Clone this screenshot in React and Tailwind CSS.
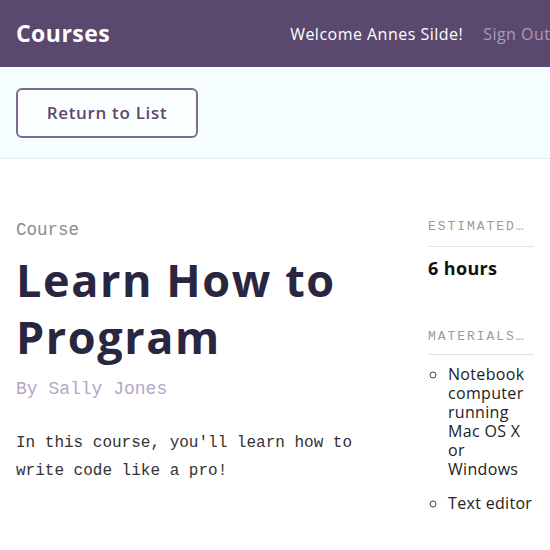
export default function App() {
  const sans = { fontFamily: '"Open Sans", "Noto Sans", sans-serif' };
  return (
    <div className="w-[550px] h-[550px] overflow-hidden bg-white" style={sans}>
      <header className="h-[67px] bg-[#5b486e] flex items-center pl-4 w-[620px]">
        <h1 className="text-[23px] font-bold text-white tracking-[0.02em]">Courses</h1>
        <div className="ml-[180px] flex items-center gap-5 text-[16px] tracking-[0.03em] whitespace-nowrap">
          <span className="text-white">Welcome Annes Silde!</span>
          <span className="text-[#a99cb8]">Sign Out</span>
        </div>
      </header>

      <div className="h-[92px] bg-[#f5fdff] border-b border-[#e6f1f4] px-4 flex items-center">
        <button className="h-[50px] w-[182px] border-2 border-[#7d6b90] rounded-md text-[#5b486e] text-[17px] font-semibold tracking-[0.04em] bg-white/60">
          Return to List
        </button>
      </div>

      <div className="flex px-4 pt-[58px]">
        <main className="w-[380px] shrink-0">
          <p className="text-[17.5px] text-[#8c8c8c] font-['Liberation_Mono',monospace]">Course</p>
          <h2 className="mt-[8px] text-[45px] leading-[57px] font-bold text-[#2a2540] tracking-[0.035em]">
            Learn How to Program
          </h2>
          <p className="mt-[11px] text-[18px] text-[#b3a7c5] font-['Liberation_Mono',monospace]">By Sally Jones</p>
          <p className="mt-[26px] text-[16px] leading-[28px] text-[#333] font-['Liberation_Mono',monospace] pr-4">
            In this course, you'll learn how to write code like a pro!
          </p>
        </main>

        <aside className="ml-[32px] w-[107px]">
          <p className="text-[13px] tracking-[0.15em] text-[#9a9a9a] uppercase whitespace-nowrap overflow-hidden font-['Liberation_Mono',monospace] pb-[9px] border-b border-[#e2e2e2]">
            Estimated…
          </p>
          <p className="mt-[8px] text-[18px] font-bold text-[#111] tracking-[0.02em]">6 hours</p>

          <p className="mt-[45px] text-[13px] tracking-[0.15em] text-[#9a9a9a] uppercase whitespace-nowrap overflow-hidden font-['Liberation_Mono',monospace] pb-[8px] border-b border-[#e2e2e2]">
            Materials…
          </p>
          <ul className="mt-[10px] pl-5 list-[circle] text-[16px] leading-[19px] text-[#222] tracking-[0.02em] marker:text-[#444]">
            <li>Notebook computer running Mac OS X or Windows</li>
            <li className="mt-[15px]">Text editor</li>
          </ul>
        </aside>
      </div>
    </div>
  );
}
